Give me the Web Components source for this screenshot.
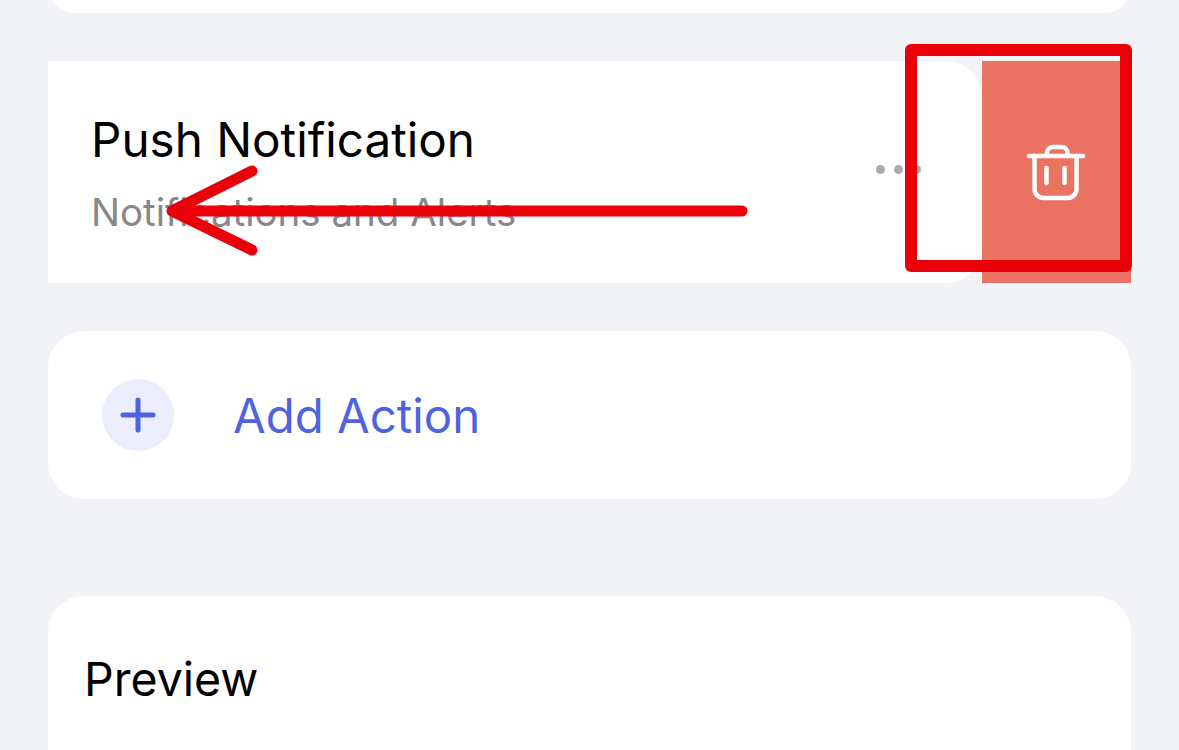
<!DOCTYPE html>
<html>
<head>
<meta charset="utf-8">
<style>
  html, body { margin: 0; height: 750px; overflow: hidden; }
  body { background: #f2f3f7; font-family: Inter, "Liberation Sans", Arial, sans-serif; position: relative; }
  .col { display: flex; flex-direction: column; padding: 0 48px; margin-top: -40px; }
</style>
</head>
<body>
<div class="col">
  <plain-card style="height:53px"></plain-card>
  <swipe-row style="margin-top:48px" title="Push Notification" sub="Notifications and Alerts"></swipe-row>
  <add-action style="margin-top:48px">Add Action</add-action>
  <plain-card open style="margin-top:97px;height:154px"><span>Preview</span></plain-card>
</div>
<mark-up></mark-up>
<script>
class PlainCard extends HTMLElement {
  constructor() {
    super();
    this.attachShadow({mode: 'open'});
    this.shadowRoot.innerHTML = `
      <style>
        :host { display: block; background: #fff; border-radius: 36px; box-sizing: border-box; }
        :host([open]) { border-radius: 36px 36px 0 0; }
        .in { padding: 55px 0 0 36px; font-size: 46.500px; line-height: 56px; color: #000; }
      </style>
      <div class="in"><slot></slot></div>`;
  }
}
customElements.define('plain-card', PlainCard);

class SwipeRow extends HTMLElement {
  constructor() {
    super();
    this.attachShadow({mode: 'open'});
  }
  connectedCallback() {
    this.shadowRoot.innerHTML = `
      <style>
        :host { display: flex; height: 222px; }
        .main { flex: 1; background: #fff; border-radius: 0 36px 36px 0; display: flex; align-items: center; padding: 0 61px 0 43px; }
        .txt { flex: 1; padding-top: 3px; }
        .title { font-size: 47.600px; line-height: 56px; color: #000; }
        .sub { font-size: 38.500px; line-height: 46px; color: #87878c; margin-top: 21px; }
        .dots { display: flex; gap: 9px; margin-top: -5px; }
        .dots i { width: 9px; height: 9px; border-radius: 50%; background: #a9a9ae; }
        .del { width: 149px; background: #ec7363; display: flex; align-items: center; justify-content: center; }
        .del svg { margin-left: -1px; }
      </style>
      <div class="main">
        <div class="txt">
          <div class="title">${this.getAttribute('title')}</div>
          <div class="sub">${this.getAttribute('sub')}</div>
        </div>
        <div class="dots"><i></i><i></i><i></i></div>
      </div>
      <div class="del">
        <svg width="60" height="60" viewBox="0 0 60 60" fill="none" stroke="#fff" stroke-width="4.5" stroke-linecap="round" stroke-linejoin="round">
          <path d="M3 14H57"/>
          <path d="M8.500 14V47a9 9 0 0 0 9 9H41.500a9 9 0 0 0 9-9V14"/>
          <path d="M21 13V11a6 6 0 0 1 6-6H35.500a6 6 0 0 1 6 6V13"/>
          <path d="M20.500 26V41M38.500 26V41"/>
        </svg>
      </div>`;
  }
}
customElements.define('swipe-row', SwipeRow);

class AddAction extends HTMLElement {
  constructor() {
    super();
    this.attachShadow({mode: 'open'});
    this.shadowRoot.innerHTML = `
      <style>
        :host { display: flex; align-items: center; height: 168px; background: #fff; border-radius: 36px; padding-left: 54px; gap: 59px; color: #4f63e0; font-size: 47.400px; }
        .plus { width: 72px; height: 72px; border-radius: 50%; background: #ebedfc; display: flex; align-items: center; justify-content: center; }
      </style>
      <div class="plus">
        <svg width="36" height="36" viewBox="0 0 36 36" stroke="#4f63e0" stroke-width="5" stroke-linecap="round"><path d="M18 3V33M3 18H33"/></svg>
      </div>
      <span><slot></slot></span>`;
  }
}
customElements.define('add-action', AddAction);

class MarkUp extends HTMLElement {
  constructor() {
    super();
    this.attachShadow({mode: 'open'});
    this.shadowRoot.innerHTML = `
      <style>
        :host { position: absolute; inset: 0; display: block; pointer-events: none; }
      </style>
      <svg width="1179" height="750" fill="none" stroke="#ea0008" stroke-linecap="round" stroke-linejoin="round">
        <rect x="911" y="50" width="215" height="216" stroke-width="12"/>
        <path d="M742 211H172M252 171L172 211L252 250" stroke-width="11"/>
      </svg>`;
  }
}
customElements.define('mark-up', MarkUp);
</script>
</body>
</html>
